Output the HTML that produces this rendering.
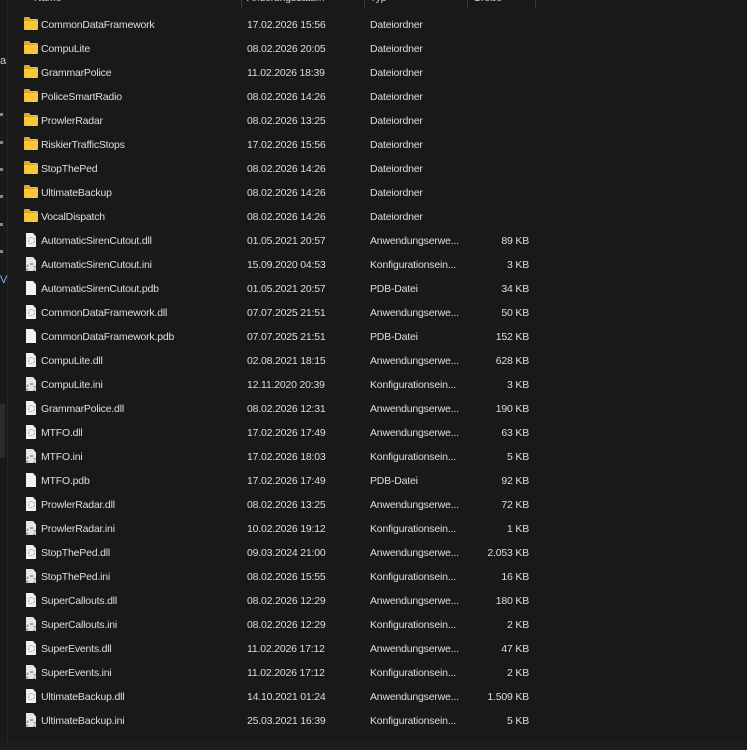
<!DOCTYPE html><html><head><meta charset="utf-8"><style>
*{margin:0;padding:0;box-sizing:border-box}
body{width:747px;height:750px;background:#191919;overflow:hidden;position:relative;font-family:"Liberation Sans",sans-serif;font-size:10.5px;letter-spacing:-0.2px;color:#dedede}
.sep{position:absolute;left:7px;top:0;width:1px;height:742px;background:#262626}
.bot{position:absolute;left:0;top:742px;width:747px;height:8px;background:#1c1c1c}
.hs{position:absolute;top:0;width:1px;height:8px;background:#3a3a3a}
.ht{position:absolute;top:-8px;color:#cfcfcf}
.row{position:absolute;left:0;height:24px;width:747px}
.row span{position:absolute;top:7px;white-space:nowrap}
.n{left:41px}.d{left:247px}.t{left:370px}.s{right:218px;text-align:right}
.fold{position:absolute;left:24px;top:7px;width:14px;height:11px;background:#f8c73c;border-radius:1px}
.fold:before{content:"";position:absolute;left:0;top:-2px;width:6px;height:3px;background:#e8ab1e;border-radius:1px 1px 0 0}
.fold:after{content:"";position:absolute;left:0;top:1px;width:14px;height:1px;background:#e0a520}
.pg{position:absolute;left:26px;top:5px;width:10px;height:14px;background:#f2f2f2;clip-path:polygon(0 0,70% 0,100% 25%,100% 100%,0 100%)}
.pg.g:after{content:"";position:absolute;left:2px;top:4px;width:5px;height:5px;border-radius:50%;border:1.5px dotted #888}
.pg.i{background:#e6e6e6}
.pg.i:after{content:"";position:absolute;left:0;top:6px;width:6px;height:6px;border-radius:50%;border:2px dotted #999}
.ar{position:absolute;left:0;width:3px;height:3px;background:#888}
</style></head><body>
<div class="sep"></div><div class="bot"></div>
<div style="position:absolute;left:0;top:404px;width:5px;height:54px;background:#2a2a2a"></div>
<div style="position:absolute;left:0;top:55px;color:#ccc;font-size:11px">a</div>
<div style="position:absolute;left:0;top:274px;color:#7fb2e6;font-size:11px">V</div>
<div class="ar" style="top:113px"></div><div class="ar" style="top:141px"></div><div class="ar" style="top:168px"></div><div class="ar" style="top:195px"></div><div class="ar" style="top:223px"></div><div class="ar" style="top:250px"></div>
<div class="ht" style="left:34px">Name</div><div class="ht" style="left:247px">Änderungsdatum</div><div class="ht" style="left:370px">Typ</div><div class="ht" style="left:473px">Größe</div>
<div class="hs" style="left:241px"></div><div class="hs" style="left:364px"></div><div class="hs" style="left:467px"></div><div class="hs" style="left:535px"></div>
<div class="row" style="top:12px"><i class="fold"></i><span class="n">CommonDataFramework</span><span class="d">17.02.2026 15:56</span><span class="t">Dateiordner</span></div>
<div class="row" style="top:36px"><i class="fold"></i><span class="n">CompuLite</span><span class="d">08.02.2026 20:05</span><span class="t">Dateiordner</span></div>
<div class="row" style="top:60px"><i class="fold"></i><span class="n">GrammarPolice</span><span class="d">11.02.2026 18:39</span><span class="t">Dateiordner</span></div>
<div class="row" style="top:84px"><i class="fold"></i><span class="n">PoliceSmartRadio</span><span class="d">08.02.2026 14:26</span><span class="t">Dateiordner</span></div>
<div class="row" style="top:108px"><i class="fold"></i><span class="n">ProwlerRadar</span><span class="d">08.02.2026 13:25</span><span class="t">Dateiordner</span></div>
<div class="row" style="top:132px"><i class="fold"></i><span class="n">RiskierTrafficStops</span><span class="d">17.02.2026 15:56</span><span class="t">Dateiordner</span></div>
<div class="row" style="top:156px"><i class="fold"></i><span class="n">StopThePed</span><span class="d">08.02.2026 14:26</span><span class="t">Dateiordner</span></div>
<div class="row" style="top:180px"><i class="fold"></i><span class="n">UltimateBackup</span><span class="d">08.02.2026 14:26</span><span class="t">Dateiordner</span></div>
<div class="row" style="top:204px"><i class="fold"></i><span class="n">VocalDispatch</span><span class="d">08.02.2026 14:26</span><span class="t">Dateiordner</span></div>
<div class="row" style="top:228px"><i class="pg g"></i><span class="n">AutomaticSirenCutout.dll</span><span class="d">01.05.2021 20:57</span><span class="t">Anwendungserwe...</span><span class="s">89 KB</span></div>
<div class="row" style="top:252px"><i class="pg i"></i><span class="n">AutomaticSirenCutout.ini</span><span class="d">15.09.2020 04:53</span><span class="t">Konfigurationsein...</span><span class="s">3 KB</span></div>
<div class="row" style="top:276px"><i class="pg"></i><span class="n">AutomaticSirenCutout.pdb</span><span class="d">01.05.2021 20:57</span><span class="t">PDB-Datei</span><span class="s">34 KB</span></div>
<div class="row" style="top:300px"><i class="pg g"></i><span class="n">CommonDataFramework.dll</span><span class="d">07.07.2025 21:51</span><span class="t">Anwendungserwe...</span><span class="s">50 KB</span></div>
<div class="row" style="top:324px"><i class="pg"></i><span class="n">CommonDataFramework.pdb</span><span class="d">07.07.2025 21:51</span><span class="t">PDB-Datei</span><span class="s">152 KB</span></div>
<div class="row" style="top:348px"><i class="pg g"></i><span class="n">CompuLite.dll</span><span class="d">02.08.2021 18:15</span><span class="t">Anwendungserwe...</span><span class="s">628 KB</span></div>
<div class="row" style="top:372px"><i class="pg i"></i><span class="n">CompuLite.ini</span><span class="d">12.11.2020 20:39</span><span class="t">Konfigurationsein...</span><span class="s">3 KB</span></div>
<div class="row" style="top:396px"><i class="pg g"></i><span class="n">GrammarPolice.dll</span><span class="d">08.02.2026 12:31</span><span class="t">Anwendungserwe...</span><span class="s">190 KB</span></div>
<div class="row" style="top:420px"><i class="pg g"></i><span class="n">MTFO.dll</span><span class="d">17.02.2026 17:49</span><span class="t">Anwendungserwe...</span><span class="s">63 KB</span></div>
<div class="row" style="top:444px"><i class="pg i"></i><span class="n">MTFO.ini</span><span class="d">17.02.2026 18:03</span><span class="t">Konfigurationsein...</span><span class="s">5 KB</span></div>
<div class="row" style="top:468px"><i class="pg"></i><span class="n">MTFO.pdb</span><span class="d">17.02.2026 17:49</span><span class="t">PDB-Datei</span><span class="s">92 KB</span></div>
<div class="row" style="top:492px"><i class="pg g"></i><span class="n">ProwlerRadar.dll</span><span class="d">08.02.2026 13:25</span><span class="t">Anwendungserwe...</span><span class="s">72 KB</span></div>
<div class="row" style="top:516px"><i class="pg i"></i><span class="n">ProwlerRadar.ini</span><span class="d">10.02.2026 19:12</span><span class="t">Konfigurationsein...</span><span class="s">1 KB</span></div>
<div class="row" style="top:540px"><i class="pg g"></i><span class="n">StopThePed.dll</span><span class="d">09.03.2024 21:00</span><span class="t">Anwendungserwe...</span><span class="s">2.053 KB</span></div>
<div class="row" style="top:564px"><i class="pg i"></i><span class="n">StopThePed.ini</span><span class="d">08.02.2026 15:55</span><span class="t">Konfigurationsein...</span><span class="s">16 KB</span></div>
<div class="row" style="top:588px"><i class="pg g"></i><span class="n">SuperCallouts.dll</span><span class="d">08.02.2026 12:29</span><span class="t">Anwendungserwe...</span><span class="s">180 KB</span></div>
<div class="row" style="top:612px"><i class="pg i"></i><span class="n">SuperCallouts.ini</span><span class="d">08.02.2026 12:29</span><span class="t">Konfigurationsein...</span><span class="s">2 KB</span></div>
<div class="row" style="top:636px"><i class="pg g"></i><span class="n">SuperEvents.dll</span><span class="d">11.02.2026 17:12</span><span class="t">Anwendungserwe...</span><span class="s">47 KB</span></div>
<div class="row" style="top:660px"><i class="pg i"></i><span class="n">SuperEvents.ini</span><span class="d">11.02.2026 17:12</span><span class="t">Konfigurationsein...</span><span class="s">2 KB</span></div>
<div class="row" style="top:684px"><i class="pg g"></i><span class="n">UltimateBackup.dll</span><span class="d">14.10.2021 01:24</span><span class="t">Anwendungserwe...</span><span class="s">1.509 KB</span></div>
<div class="row" style="top:708px"><i class="pg i"></i><span class="n">UltimateBackup.ini</span><span class="d">25.03.2021 16:39</span><span class="t">Konfigurationsein...</span><span class="s">5 KB</span></div>
</body></html>
